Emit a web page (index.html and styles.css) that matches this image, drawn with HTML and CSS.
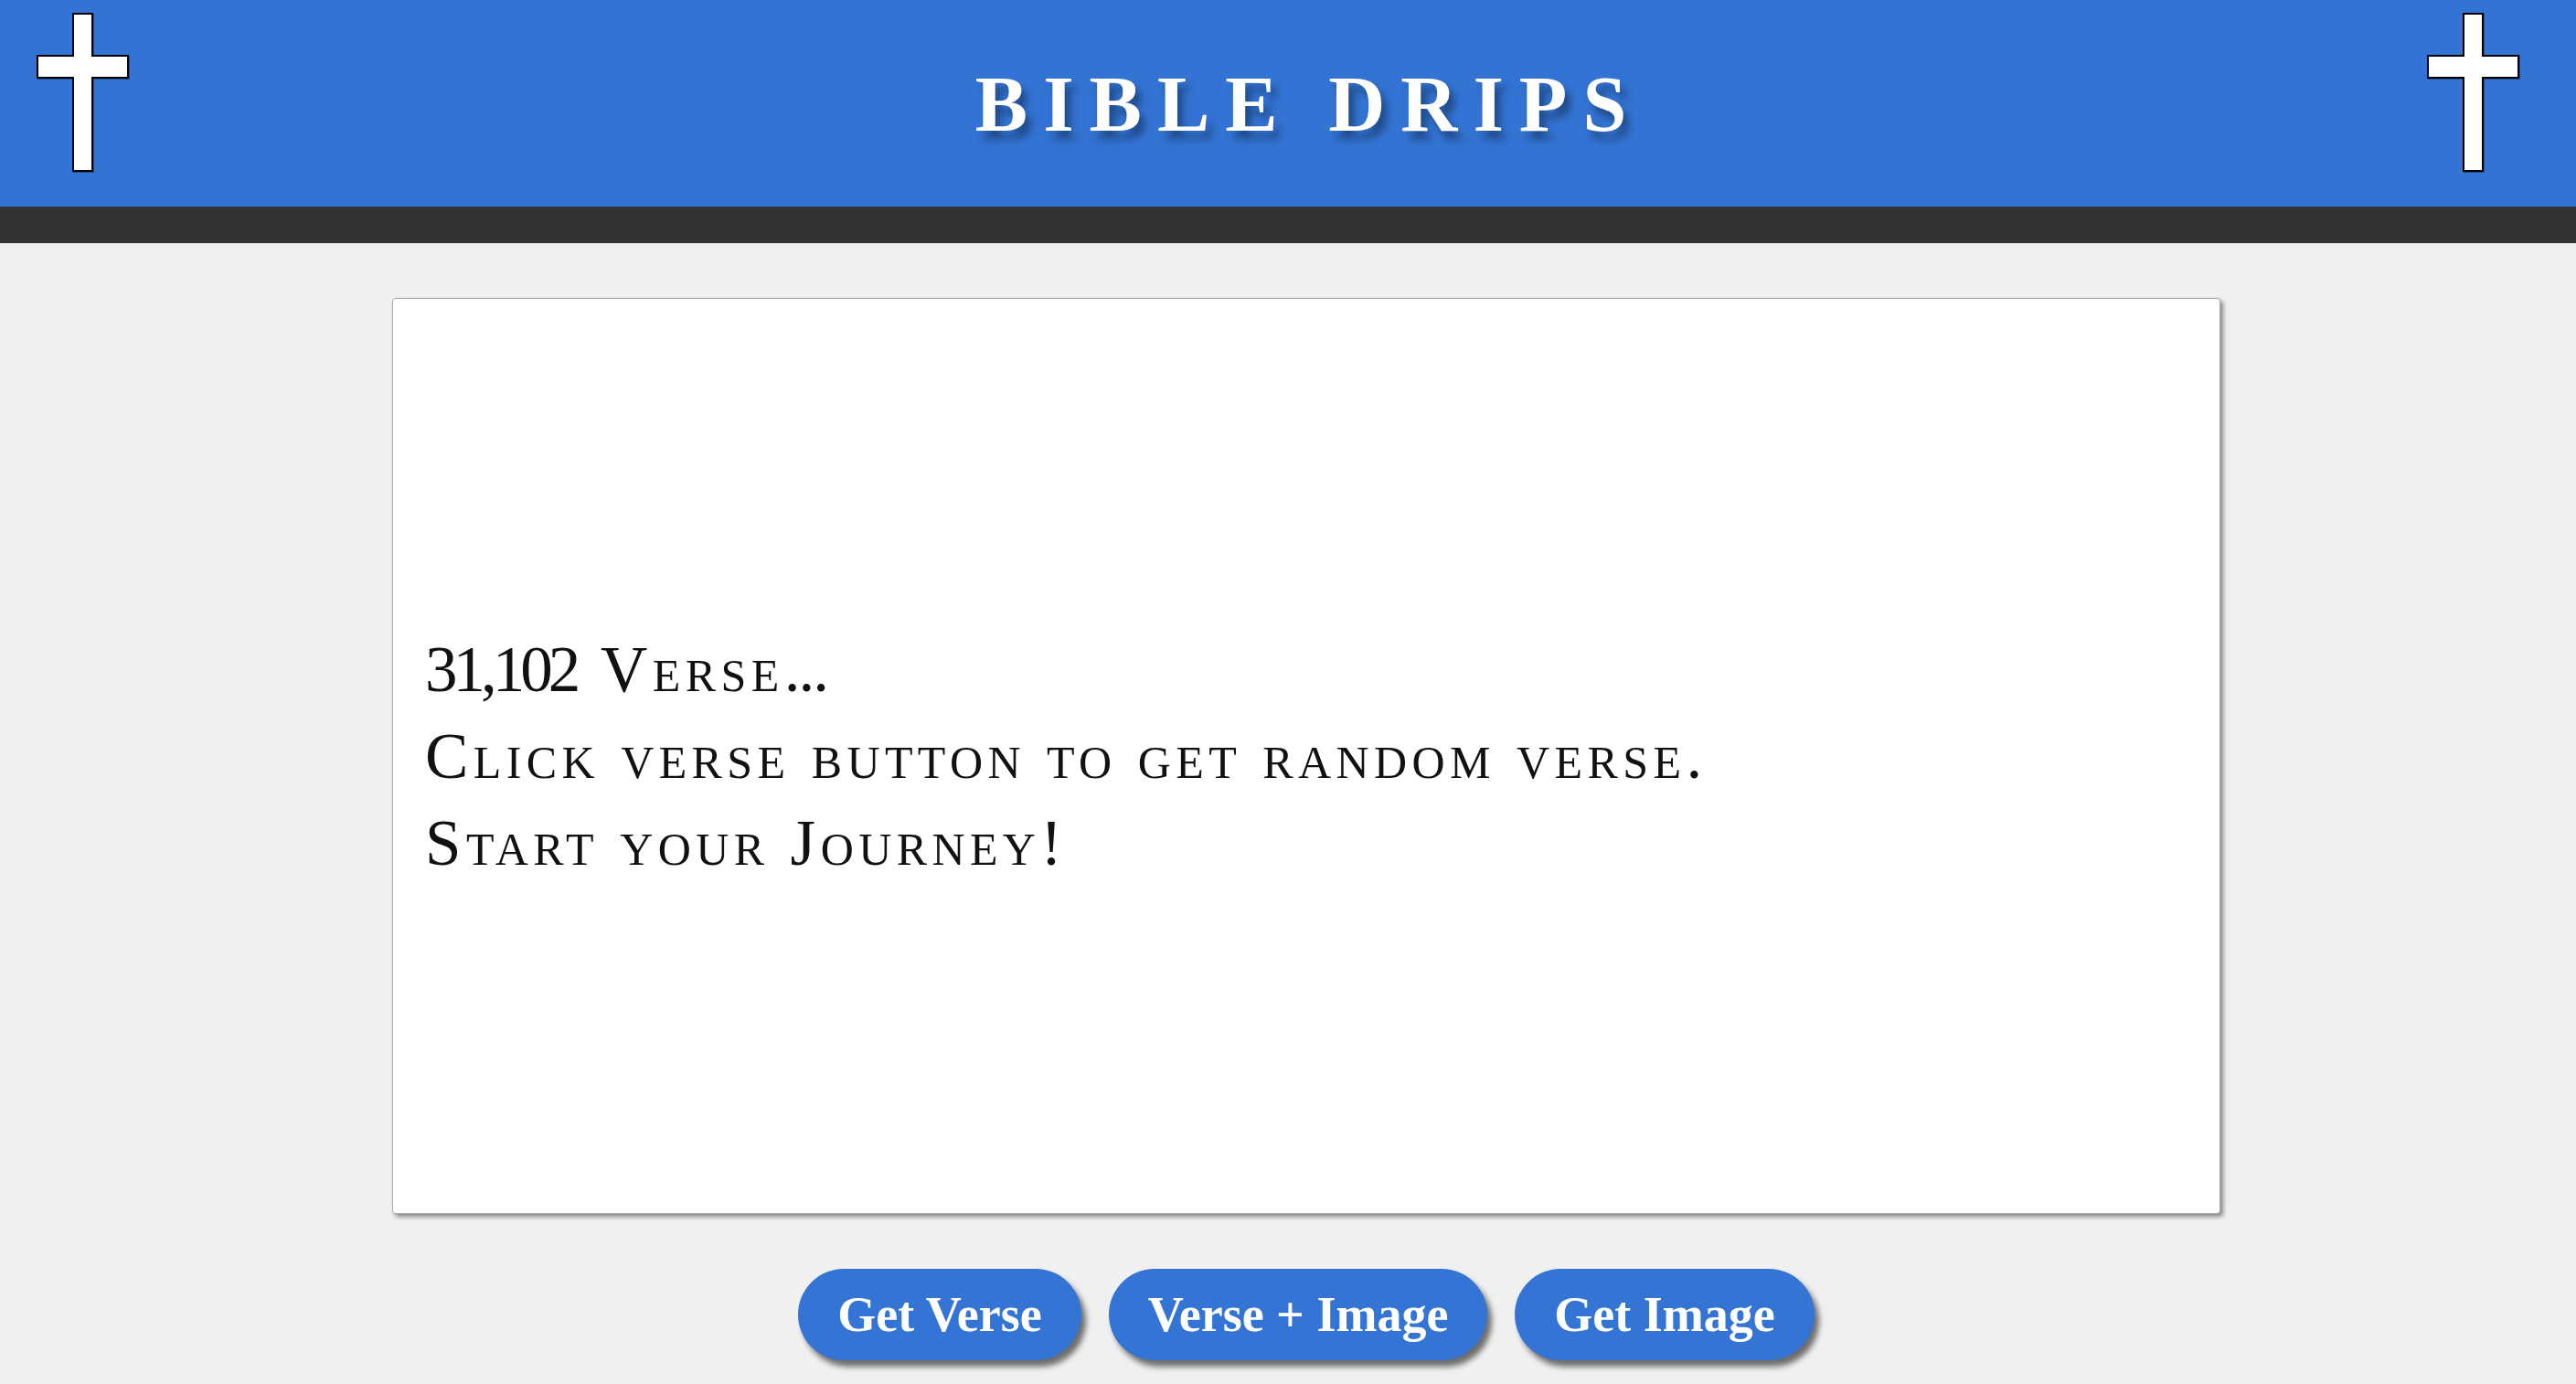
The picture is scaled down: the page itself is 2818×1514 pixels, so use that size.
FILE: index.html
```html
<!DOCTYPE html>
<html lang="en">
<head>
<meta charset="utf-8">
<title>Bible Drips</title>
<link rel="stylesheet" href="styles.css">
</head>
<body>
<header class="site-header">
  <svg class="cross" width="102" height="175" viewBox="0 0 102 175" aria-hidden="true">
    <polygon points="40,1 61,1 61,47 100,47 100,71 61,71 61,173 40,173 40,71 1,71 1,47 40,47" fill="#fff" stroke="#000" stroke-width="2"/>
  </svg>
  <h1 class="title">BIBLE DRIPS</h1>
  <svg class="cross" width="102" height="175" viewBox="0 0 102 175" aria-hidden="true">
    <polygon points="40,1 61,1 61,47 100,47 100,71 61,71 61,173 40,173 40,71 1,71 1,47 40,47" fill="#fff" stroke="#000" stroke-width="2"/>
  </svg>
</header>
<div class="band"></div>
<main class="main">
  <section class="card">
    <div class="line"><span class="num">31,102</span> Verse<span class="dots">...</span></div>
    <div class="line">Click verse button to get random verse.</div>
    <div class="line">Start your Journey!</div>
  </section>
  <div class="actions">
    <button class="btn">Get Verse</button>
    <button class="btn">Verse + Image</button>
    <button class="btn">Get Image</button>
  </div>
</main>
</body>
</html>
```
FILE: styles.css
```css
html, body {
  margin: 0;
  padding: 0;
}
body {
  background: #f0f0f0;
  font-family: "Liberation Serif", "Times New Roman", serif;
  min-height: 1514px;
  overflow: hidden;
}
.site-header {
  box-sizing: border-box;
  height: 226px;
  background: #3273d3;
  display: grid;
  grid-template-columns: auto 1fr auto;
  align-items: start;
  padding: 14px 61px 0 40px;
}
.cross {
  display: block;
  filter: drop-shadow(1px 1px 0 rgba(0,0,0,0.35));
}
.title {
  margin: 50px 0 0 0;
  padding-left: 66px;
  text-align: center;
  color: #fff;
  font-family: "Liberation Serif", "Times New Roman", serif;
  font-weight: 700;
  font-size: 86px;
  line-height: 100px;
  letter-spacing: 17px;
  text-shadow: 6px 9px 9px rgba(0, 0, 0, 0.36);
}
.band {
  height: 40px;
  background: #333333;
}
.main {
  padding: 60px 0 0 429px;
  width: 2000px;
}
.card {
  box-sizing: border-box;
  width: 2000px;
  height: 1002px;
  background: #fff;
  border: 1px solid #a9a9a9;
  border-radius: 4px;
  box-shadow: 3px 3px 5px rgba(0, 0, 0, 0.45);
  display: flex;
  flex-direction: column;
  justify-content: center;
  padding: 0 35px;
  color: #111;
  font-family: "Liberation Serif", "Times New Roman", serif;
  font-variant: small-caps;
  font-size: 71px;
  line-height: 95px;
  letter-spacing: 5.4px;
}
.num {
  letter-spacing: -5px;
  margin-right: 5px;
}
.dots {
  letter-spacing: -2px;
}
.actions {
  display: flex;
  justify-content: center;
  gap: 30px;
  margin-top: 60px;
}
.btn {
  height: 100px;
  border: none;
  border-radius: 50px;
  background: #3474d4;
  color: #fff;
  font-family: "Liberation Serif", "Times New Roman", serif;
  font-weight: 700;
  font-size: 54px;
  line-height: 100px;
  padding: 0 43px;
  box-shadow: 5px 7px 6px rgba(0, 0, 0, 0.55);
  cursor: pointer;
}
```
